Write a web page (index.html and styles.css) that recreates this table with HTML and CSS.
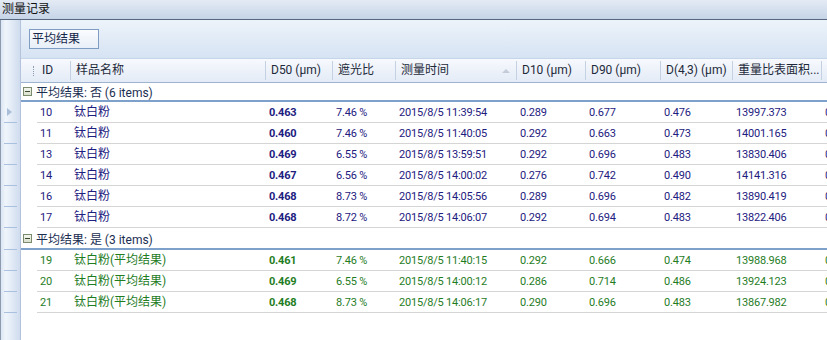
FILE: index.html
```html
<!DOCTYPE html>
<html lang="zh-CN">
<head>
  <meta charset="UTF-8">
  <title>测量记录</title>
  <link rel="stylesheet" href="styles.css">
</head>
<body>
  <div class="window">
    <div class="caption">测量记录</div>

    <div class="line">
      <div class="ind"></div>
      <div class="group-panel"><span class="group-chip">平均结果</span></div>
    </div>

    <div class="line">
      <div class="ind"></div>
      <div class="col-header">
        <div class="hcell indent"><span class="grip"></span></div>
        <div class="hcell">ID</div>
        <div class="hcell">样品名称</div>
        <div class="hcell">D50 (μm)</div>
        <div class="hcell">遮光比</div>
        <div class="hcell sorted">测量时间<span class="sort-arrow"></span></div>
        <div class="hcell">D10 (μm)</div>
        <div class="hcell">D90 (μm)</div>
        <div class="hcell">D(4,3) (μm)</div>
        <div class="hcell">重量比表面积...</div>
        <div class="hcell"></div>
      </div>
    </div>

    <!-- group: 否 -->
    <div class="line">
      <div class="ind"></div>
      <div class="group-row first"><span class="expander"></span>平均结果: 否 (6 items)</div>
    </div>
    <div class="line no">
      <div class="ind mark"><span class="current"></span></div>
      <div class="row">
        <div class="indent"></div><div class="cell">10</div><div class="cell name">钛白粉</div><div class="cell b">0.463</div><div class="cell">7.46 %</div><div class="cell">2015/8/5 11:39:54</div><div class="cell">0.289</div><div class="cell">0.677</div><div class="cell">0.476</div><div class="cell">13997.373</div><div class="cell">0</div>
      </div>
    </div>
    <div class="line no">
      <div class="ind mark"></div>
      <div class="row">
        <div class="indent"></div><div class="cell">11</div><div class="cell name">钛白粉</div><div class="cell b">0.460</div><div class="cell">7.46 %</div><div class="cell">2015/8/5 11:40:05</div><div class="cell">0.292</div><div class="cell">0.663</div><div class="cell">0.473</div><div class="cell">14001.165</div><div class="cell">0</div>
      </div>
    </div>
    <div class="line no">
      <div class="ind mark"></div>
      <div class="row">
        <div class="indent"></div><div class="cell">13</div><div class="cell name">钛白粉</div><div class="cell b">0.469</div><div class="cell">6.55 %</div><div class="cell">2015/8/5 13:59:51</div><div class="cell">0.292</div><div class="cell">0.696</div><div class="cell">0.483</div><div class="cell">13830.406</div><div class="cell">0</div>
      </div>
    </div>
    <div class="line no">
      <div class="ind mark"></div>
      <div class="row">
        <div class="indent"></div><div class="cell">14</div><div class="cell name">钛白粉</div><div class="cell b">0.467</div><div class="cell">6.56 %</div><div class="cell">2015/8/5 14:00:02</div><div class="cell">0.276</div><div class="cell">0.742</div><div class="cell">0.490</div><div class="cell">14141.316</div><div class="cell">0</div>
      </div>
    </div>
    <div class="line no">
      <div class="ind mark"></div>
      <div class="row">
        <div class="indent"></div><div class="cell">16</div><div class="cell name">钛白粉</div><div class="cell b">0.468</div><div class="cell">8.73 %</div><div class="cell">2015/8/5 14:05:56</div><div class="cell">0.289</div><div class="cell">0.696</div><div class="cell">0.482</div><div class="cell">13890.419</div><div class="cell">0</div>
      </div>
    </div>
    <div class="line no">
      <div class="ind mark"></div>
      <div class="row">
        <div class="indent"></div><div class="cell">17</div><div class="cell name">钛白粉</div><div class="cell b">0.468</div><div class="cell">8.72 %</div><div class="cell">2015/8/5 14:06:07</div><div class="cell">0.292</div><div class="cell">0.694</div><div class="cell">0.483</div><div class="cell">13822.406</div><div class="cell">0</div>
      </div>
    </div>

    <!-- group: 是 -->
    <div class="line">
      <div class="ind mark"></div>
      <div class="group-row"><span class="expander"></span>平均结果: 是 (3 items)</div>
    </div>
    <div class="line yes">
      <div class="ind mark"></div>
      <div class="row">
        <div class="indent"></div><div class="cell">19</div><div class="cell name">钛白粉(平均结果)</div><div class="cell b">0.461</div><div class="cell">7.46 %</div><div class="cell">2015/8/5 11:40:15</div><div class="cell">0.292</div><div class="cell">0.666</div><div class="cell">0.474</div><div class="cell">13988.968</div><div class="cell">0</div>
      </div>
    </div>
    <div class="line yes">
      <div class="ind mark"></div>
      <div class="row">
        <div class="indent"></div><div class="cell">20</div><div class="cell name">钛白粉(平均结果)</div><div class="cell b">0.469</div><div class="cell">6.55 %</div><div class="cell">2015/8/5 14:00:12</div><div class="cell">0.286</div><div class="cell">0.714</div><div class="cell">0.486</div><div class="cell">13924.123</div><div class="cell">0</div>
      </div>
    </div>
    <div class="line yes">
      <div class="ind mark"></div>
      <div class="row">
        <div class="indent"></div><div class="cell">21</div><div class="cell name">钛白粉(平均结果)</div><div class="cell b">0.468</div><div class="cell">8.73 %</div><div class="cell">2015/8/5 14:06:17</div><div class="cell">0.290</div><div class="cell">0.696</div><div class="cell">0.483</div><div class="cell">13867.982</div><div class="cell">0</div>
      </div>
    </div>

    <div class="line filler">
      <div class="ind"></div>
      <div class="empty"></div>
    </div>
  </div>
</body>
</html>
```

FILE: styles.css
```css
body {
  margin: 0;
  font-family: "Roboto", "Noto Sans CJK SC", sans-serif;
  font-size: 12px;
  color: #1e1e1e;
  background: #fff;
  overflow: hidden;
}
.window {
  width: 827px;
  height: 340px;
  display: flex;
  flex-direction: column;
  overflow: hidden;
}
.caption {
  height: 19px;
  line-height: 19px;
  padding-left: 2px;
  color: #101010;
  background: linear-gradient(#e4ebf5, #c6d4e7);
  border-bottom: 1px solid #56677e;
  flex: none;
}
.line {
  display: flex;
  flex: none;
}
.line.filler {
  flex: 1;
}
.ind {
  width: 21px;
  flex: none;
  box-sizing: border-box;
  border-left: 1px solid #8c9bb0;
  border-right: 1px solid #b3c4dc;
  background: linear-gradient(to right, #dbe6f3, #f0f5fb 25%, #cfdcee);
  position: relative;
}
.ind.mark::after {
  content: "";
  position: absolute;
  left: 3px;
  right: 3px;
  bottom: 0;
  border-bottom: 1px solid #a9c0de;
}
.current {
  position: absolute;
  left: 6px;
  top: 6px;
  border-left: 5px solid #a9bfd9;
  border-top: 4px solid transparent;
  border-bottom: 4px solid transparent;
}
.group-panel {
  flex: 1;
  height: 38px;
  box-sizing: border-box;
  padding: 9px 0 0 8px;
  background: linear-gradient(#edf3fa, #d6e3f3);
}
.group-chip {
  display: inline-block;
  width: 70px;
  height: 20px;
  line-height: 18px;
  box-sizing: border-box;
  padding-left: 2px;
  border: 1px solid #7f9dc3;
  background: linear-gradient(#fafcfe, #e8eff8);
  color: #15284a;
}

/* column header */
.col-header {
  flex: 1;
  display: grid;
  grid-template-columns: 16px 34px 195px 67px 63px 121px 69px 75px 72px 89px 1fr;
  height: 25px;
  box-sizing: border-box;
  border-top: 1px solid #c7d5e8;
  border-bottom: 1px solid #9db3cf;
  background: linear-gradient(#f7f9fd, #e3ebf6);
  color: #1e2a3a;
}
.hcell {
  padding-left: 5px;
  white-space: nowrap;
  overflow: hidden;
  border-right: 1px solid #c4d1e3;
  margin: 2px 0;
  line-height: 19px;
}
.hcell.indent {
  padding: 0;
  border-right: none;
  position: relative;
}
.grip {
  position: absolute;
  left: 12px;
  top: 5px;
  height: 10px;
  border-left: 1px dotted #8d9bb0;
}
.hcell.sorted {
  position: relative;
}
.sort-arrow {
  position: absolute;
  right: 6px;
  top: 8px;
  border-bottom: 4px solid #c3ccd8;
  border-left: 4px solid transparent;
  border-right: 4px solid transparent;
}

/* group rows */
.group-row {
  flex: 1;
  height: 20px;
  padding-left: 2px;
  border-bottom: 2px solid #7ea1cc;
  color: #1b2e52;
  display: flex;
  align-items: center;
}
.group-row.first {
  height: 17px;
}
.expander {
  width: 7px;
  height: 7px;
  margin-right: 4px;
  border: 1px solid #7b8b6e;
  background: linear-gradient(#f4f6ef, #d9dfcd);
  position: relative;
}
.expander::after {
  content: "";
  position: absolute;
  left: 1px;
  right: 1px;
  top: 3px;
  border-top: 1px solid #3b4a2c;
}

/* data rows */
.row {
  flex: 1;
  display: grid;
  grid-template-columns: 16px 34px 195px 67px 63px 121px 69px 75px 72px 89px 1fr;
  height: 21px;
}
.row .indent {
  background: #fff;
}
.cell {
  padding: 1px 0 0 3px;
  line-height: 19px;
  font-size: 11px;
  letter-spacing: -0.2px;
  white-space: nowrap;
  overflow: hidden;
  border-bottom: 1px solid #d5d5d5;
}
.cell.name {
  font-size: 12px;
  letter-spacing: 0;
}
.cell.b {
  font-weight: bold;
}
.no .cell {
  color: #1d2080;
}
.yes .cell {
  color: #1f7d1f;
}
.empty {
  flex: 1;
  background: #fff;
}
```
